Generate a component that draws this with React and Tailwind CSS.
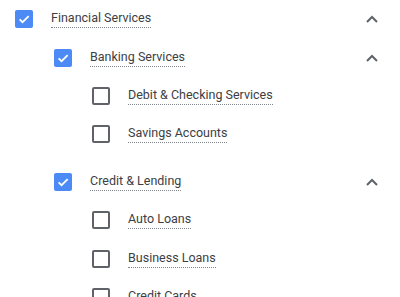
import React from "react";

function Check({ checked }) {
  if (checked) {
    return (
      <div className="w-[18px] h-[18px] rounded-[2px] bg-[#4c8bf5] flex items-center justify-center shrink-0">
        <svg width="14" height="14" viewBox="0 0 24 24">
          <path d="M4.5 12.5l5 5L20 7" fill="none" stroke="white" strokeWidth="3" />
        </svg>
      </div>
    );
  }
  return <div className="w-[18px] h-[18px] rounded-[2px] border-2 border-[#5f6368] shrink-0" />;
}

function Chevron() {
  return (
    <svg width="12" height="8" viewBox="0 0 12 8" className="shrink-0">
      <path d="M1 7l5-5 5 5" fill="none" stroke="#5f6368" strokeWidth="2" />
    </svg>
  );
}

function Row({ level, checked, label, expandable }) {
  const pad = level === 0 ? "pl-[15px]" : level === 1 ? "pl-[54px]" : "pl-[92px]";
  return (
    <div className={`h-[38.4px] flex items-center ${pad} pr-[22px]`}>
      <Check checked={checked} />
      <span className="ml-[18px] text-[12.5px] leading-[16px] text-[#3c4043] border-b border-dotted border-[#80868b] pb-[1px]">
        {label}
      </span>
      <div className="flex-1" />
      {expandable && <Chevron />}
    </div>
  );
}

export default function App() {
  return (
    <div className="w-[400px] h-[297px] bg-white overflow-hidden" style={{ fontFamily: "Roboto, sans-serif" }}>
      <Row level={0} checked label="Financial Services" expandable />
      <Row level={1} checked label="Banking Services" expandable />
      <Row level={2} label="Debit & Checking Services" />
      <Row level={2} label="Savings Accounts" />
      <div className="h-[9px]" />
      <Row level={1} checked label="Credit & Lending" expandable />
      <Row level={2} label="Auto Loans" />
      <Row level={2} label="Business Loans" />
      <Row level={2} label="Credit Cards" />
    </div>
  );
}
